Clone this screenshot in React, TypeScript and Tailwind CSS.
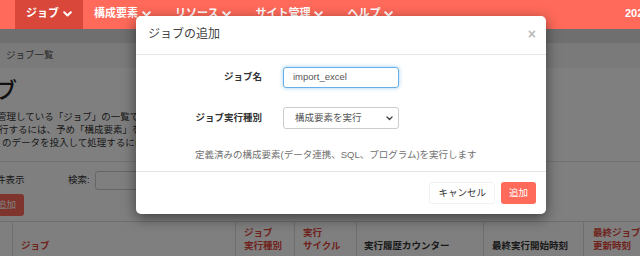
import React from 'react';

const NavChevron: React.FC = () => (
  <svg width="9" height="6" viewBox="0 0 9 6" className="ml-[4px] shrink-0">
    <path d="M1.2 1.2 L4.5 4.5 L7.8 1.2" fill="none" stroke="white" strokeWidth="2" strokeLinecap="round" strokeLinejoin="round" />
  </svg>
);

const navItems = ['ジョブ', '構成要素', 'リソース', 'サイト管理', 'ヘルプ'];

const App: React.FC = () => {
  return (
    <div className="relative w-[640px] h-[256px] overflow-hidden bg-white font-['Liberation_Sans','Noto_Sans_CJK_JP',sans-serif] text-[#333]">
      {/* top nav sits above the backdrop */}
      <nav className="relative z-20 h-[29px] bg-[#ff6a5a] flex items-stretch pl-[15px]">
        {navItems.map((label, i) => (
          <div
            key={label}
            className={`flex items-center px-[11px] pb-[2px] text-[11px] font-bold text-white whitespace-nowrap ${i === 0 ? 'bg-[#d8473a]' : 'mr-[2px]'}`}
          >
            {label}
            <NavChevron />
          </div>
        ))}
        <div className="ml-auto w-[15px] shrink-0 flex items-center pb-[2px] text-[11px] font-bold text-white whitespace-nowrap">
          2020/04
        </div>
      </nav>

      {/* page behind the modal */}
      <div className="h-[14px] bg-[#dedede]" />
      <div className="h-[25px] bg-[#f4f4f4] flex items-center px-[6px] text-[9.5px] text-[#555]">ジョブ一覧</div>

      <main className="text-[9.5px]">
        <h1 className="mt-[10px] ml-[-49px] text-[22px] leading-[26px] font-medium text-[#222] whitespace-nowrap">ジョブ</h1>
        <div className="mt-[6px] pb-[12px] border-b border-[#e5e5e5] leading-[13px] whitespace-nowrap">
          <p className="ml-[-3px]">管理している「ジョブ」の一覧です。</p>
          <p className="ml-[-1px]">行するには、予め「構成要素」を作成</p>
          <p className="ml-[2px]">のデータを投入して処理するには「</p>
        </div>

        <div className="mt-[9px] h-[19px] flex items-center whitespace-nowrap">
          <span className="w-[68px] shrink-0 ml-[-4px]">件表示</span>
          <span className="ml-[4px]">検索:</span>
          <div className="ml-[5px] w-[160px] h-[19px] border border-[#ccc] rounded-[3px]" />
        </div>

        <div className="mt-[4px] ml-[-11px] w-fit h-[22px] px-[8px] flex items-center rounded-[3px] bg-[#ff6a5a] text-white">追加</div>

        <div className="mt-[5px] border-t border-[#ddd] grid grid-cols-[12px_223px_59px_62px_127px_100px_1fr] font-bold leading-[13px] whitespace-nowrap">
          <div className="h-[40px]" />
          <div className="h-[40px] border-l border-[#ddd] pl-[8px] pb-[10px] flex flex-col justify-end text-[#e0463a]">ジョブ</div>
          <div className="h-[40px] border-l border-[#ddd] pl-[8px] pb-[10px] flex flex-col justify-end text-[#e0463a]">
            <span>ジョブ</span>
            <span>実行種別</span>
          </div>
          <div className="h-[40px] border-l border-[#ddd] pl-[8px] pb-[10px] flex flex-col justify-end text-[#e0463a]">
            <span>実行</span>
            <span>サイクル</span>
          </div>
          <div className="h-[40px] border-l border-[#ddd] pl-[7px] pb-[10px] flex flex-col justify-end">実行履歴カウンター</div>
          <div className="h-[40px] border-l border-[#ddd] pl-[8px] pb-[10px] flex flex-col justify-end">最終実行開始時刻</div>
          <div className="h-[40px] border-l border-[#ddd] pl-[9px] pb-[10px] flex flex-col justify-end text-[#e0463a]">
            <span>最終ジョブ</span>
            <span>更新時刻</span>
          </div>
        </div>
      </main>

      {/* backdrop */}
      <div className="absolute inset-0 z-10 bg-black/50" />

      {/* modal */}
      <div className="absolute z-30 left-[136px] top-[16px] w-[410px] h-[198px] bg-white rounded-[5px] shadow-[0_4px_14px_rgba(0,0,0,0.5)] flex flex-col">
        <div className="h-[39px] shrink-0 border-b border-[#e5e5e5] flex items-center justify-between pl-[12px] pr-[10px] pb-[2px]">
          <span className="text-[12px] text-[#444]">ジョブの追加</span>
          <span className="text-[14px] font-bold leading-none text-[#bbb]">×</span>
        </div>

        <div className="flex-1 flex flex-col pt-[12px] text-[9.5px]">
          <div className="flex items-center h-[21px]">
            <label className="w-[126px] text-right font-bold text-[#333]">ジョブ名</label>
            <div className="ml-[21px] w-[116px] h-[21px] border border-[#66afe9] rounded-[3px] shadow-[0_0_4px_rgba(102,175,233,0.6)] flex items-center pl-[9px] text-[#555]">
              import_excel
            </div>
          </div>
          <div className="flex items-center h-[22px] mt-[19px]">
            <label className="w-[126px] text-right font-bold text-[#333]">ジョブ実行種別</label>
            <div className="ml-[21px] w-[116px] h-[22px] border border-[#ccc] rounded-[3px] flex items-center justify-between pl-[11px] pr-[5px] text-[#555]">
              <span>構成要素を実行</span>
              <svg width="7" height="5" viewBox="0 0 7 5">
                <path d="M1 1 L3.5 3.5 L6 1" fill="none" stroke="#444" strokeWidth="1.4" strokeLinecap="round" strokeLinejoin="round" />
              </svg>
            </div>
          </div>
          <p className="mt-[19px] pl-[59px] leading-[13px] text-[#707070] whitespace-nowrap">
            定義済みの構成要素(データ連携、SQL、プログラム)を実行します
          </p>
        </div>

        <div className="h-[43px] shrink-0 border-t border-[#e5e5e5] flex items-center justify-end gap-[6px] pr-[10px] text-[9.5px]">
          <div className="h-[22px] px-[8px] flex items-center rounded-[3px] border border-[#f2f2f2] bg-white text-[#333]">キャンセル</div>
          <div className="h-[22px] px-[8px] flex items-center rounded-[3px] bg-[#ff6a5a] text-white">追加</div>
        </div>
      </div>
    </div>
  );
};

export default App;
